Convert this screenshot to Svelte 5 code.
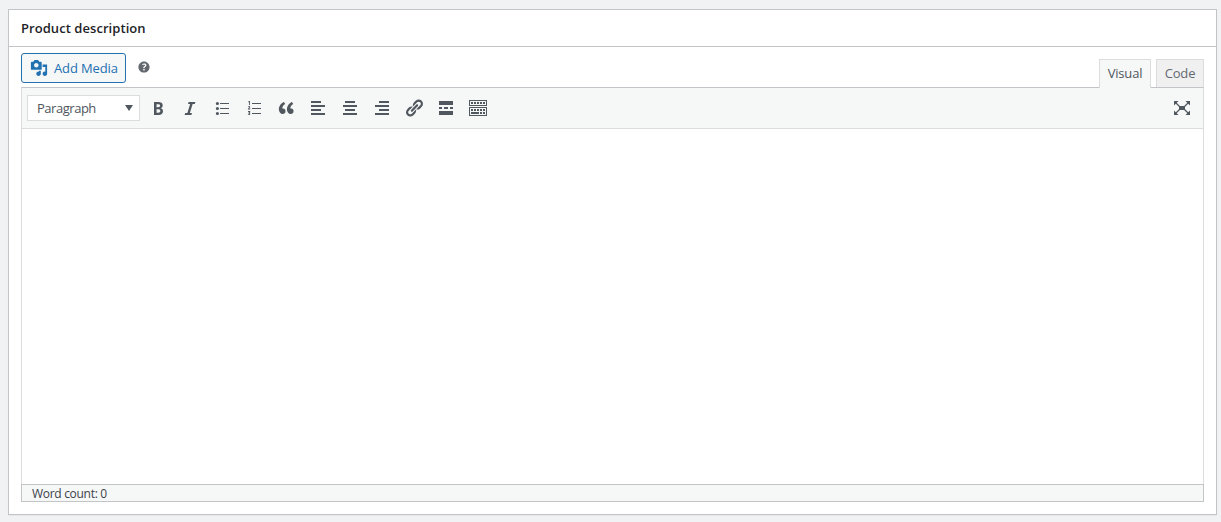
<script>
  let tab = $state('visual');
  let content = $state('');

  let words = $derived(content.trim() ? content.trim().split(/\s+/).length : 0);

  // 20x20 toolbar glyphs
  const tools = [
    { name: 'Bold', d: 'M6 4v13h4.54c1.37 0 2.46-.33 3.26-1 .8-.66 1.2-1.58 1.2-2.77 0-.84-.17-1.51-.51-2.01s-.9-.85-1.67-1.03v-.09c.57-.1 1.02-.4 1.36-.9s.51-1.13.51-1.91c0-1.14-.39-1.98-1.17-2.5C12.75 4.26 11.5 4 9.78 4H6zm2.57 5.15V6.26h1.36c.73 0 1.27.11 1.61.32.34.22.51.58.51 1.07 0 .54-.16.92-.47 1.15s-.82.35-1.51.35h-1.5zm0 2.19h1.6c1.44 0 2.16.53 2.16 1.61 0 .6-.17 1.05-.51 1.34s-.86.43-1.57.43H8.57v-3.38z' },
    { name: 'Italic', d: 'M14.78 6h-2.13l-2.8 9h2.12l-.62 2H4.6l.62-2h2.14l2.8-9H8.03l.62-2h6.75z' },
    { name: 'Bulleted list', d: 'M7 5.500a1.600 1.600 0 1 1-3.200 0 1.600 1.600 0 0 1 3.200 0zM7 10.500a1.600 1.600 0 1 1-3.200 0 1.600 1.600 0 0 1 3.200 0zM7 15.500a1.600 1.600 0 1 1-3.200 0 1.600 1.600 0 0 1 3.200 0zM8 5h9v1H8zM8 10h9v1H8zM8 15h9v1H8z' },
    { name: 'Numbered list', d: 'M8 5h9v1H8zM8 10h9v1H8zM8 15h9v1H8zM5.1 3h.9v4h-.9V4.100l-.9.5v-.9zM4 8.500c.7-.8 2.200-.6 2.200.5 0 .7-.7 1.100-1.100 1.600h1.200v.8H3.900v-.7c.6-.6 1.400-1.200 1.400-1.600 0-.5-.6-.4-1 0zM4 13h2.200v1.300l-.5.5c.8.1.8 2.200-.8 2.200-.4 0-.7-.1-1-.2v-.8c.6.3 1.400.3 1.400-.2 0-.4-.5-.4-.9-.4v-.6l.8-.9H4z' },
    { name: 'Blockquote', d: 'M9.49 13.22c0-.74-.2-1.38-.61-1.9-.62-.78-1.83-.88-2.53-.72-.29-1.65 1.11-3.75 2.92-4.65L7.88 4c-2.73 1.3-5.42 4.28-4.96 8.05C3.21 14.43 4.59 16 6.54 16c.85 0 1.56-.25 2.12-.75s.83-1.18.83-2.03zm8.05 0c0-.74-.2-1.38-.61-1.9-.63-.78-1.83-.88-2.53-.72-.29-1.65 1.11-3.75 2.92-4.65L15.93 4c-2.73 1.3-5.41 4.28-4.95 8.05.29 2.38 1.66 3.95 3.61 3.95.85 0 1.56-.25 2.12-.75s.83-1.18.83-2.03z' },
    { name: 'Align left', d: 'M3 3h10v2H3zM3 7h14v2H3zM3 11h10v2H3zM3 15h14v2H3z' },
    { name: 'Align center', d: 'M5 3h10v2H5zM3 7h14v2H3zM5 11h10v2H5zM3 15h14v2H3z' },
    { name: 'Align right', d: 'M7 3h10v2H7zM3 7h14v2H3zM7 11h10v2H7zM3 15h14v2H3z' },
    { name: 'Link', d: 'M17.74 2.76c1.68 1.69 1.68 4.41 0 6.1l-1.53 1.52c-1.12 1.12-2.7 1.47-4.14 1.09l2.62-2.61.76-.77.76-.76c.84-.84.84-2.2 0-3.04-.84-.85-2.2-.85-3.04 0l-.77.76-3.38 3.38c-.37-1.44-.02-3.02 1.1-4.14l1.52-1.53c1.69-1.68 4.42-1.68 6.1 0zM8.59 13.43l5.34-5.34c.42-.42.42-1.1 0-1.52-.44-.43-1.13-.39-1.53 0l-5.33 5.34c-.42.42-.42 1.1 0 1.52.44.43 1.13.39 1.52 0zm-.76 2.29l4.14-4.15c.38 1.44.03 3.02-1.09 4.14l-1.52 1.53c-1.69 1.68-4.41 1.68-6.1 0-1.68-1.68-1.68-4.42 0-6.1l1.53-1.52c1.12-1.12 2.7-1.47 4.14-1.1l-4.14 4.15c-.85.84-.85 2.2 0 3.05.84.84 2.2.84 3.04 0z' },
    { name: 'Read more', d: 'M3 3h14v4H3zM3 9h3v2H3zM8 9h4v2H8zM14 9h3v2h-3zM3 13h14v4H3z' },
    { name: 'Toolbar toggle', d: 'M1 2h18v6H1zM2 3v4h16V3zM3 4h2v2H3zM6 4h2v2H6zM9 4h2v2H9zM12 4h2v2h-2zM15 4h2v2h-2zM1 9h18v9H1zM2 10v7h16v-7zM3 11h2v2H3zM6 11h2v2H6zM9 11h2v2H9zM12 11h2v2h-2zM15 11h2v2h-2zM3 14h8v2H3zM12 14h2v2h-2zM15 14h2v2h-2z' }
  ];
</script>

<section class="postbox">
  <header><h2>Product description</h2></header>

  <div class="inside">
    <div class="editor-tools">
      <div class="media-buttons">
        <button type="button" class="add-media">
          <svg width="18" height="18" viewBox="0 0 20 20"><path d="M13 11V4c0-.55-.45-1-1-1h-1.67L9 1H5L3.67 3H2c-.55 0-1 .45-1 1v7c0 .55.45 1 1 1h10c.55 0 1-.45 1-1zM7 4.500c1.380 0 2.500 1.120 2.500 2.500S8.380 9.500 7 9.500 4.500 8.380 4.500 7 5.620 4.500 7 4.500zM14 6h5v10.500c0 1.380-1.120 2.500-2.500 2.500S14 17.880 14 16.500s1.120-2.500 2.500-2.500c.17 0 .34.02.5.05V9h-3V6zm-4 8.050V13h2v3.500c0 1.380-1.120 2.500-2.500 2.500S7 17.880 7 16.500 8.120 14 9.500 14c.17 0 .34.02.5.05z" /></svg>
          <span>Add Media</span>
        </button>
        <svg class="help" width="16" height="16" viewBox="0 0 20 20">
          <path d="M17 10c0-3.870-3.140-7-7-7-3.870 0-7 3.130-7 7s3.130 7 7 7c3.860 0 7-3.130 7-7zm-6.300 1.480H9.140v-.43c0-.38.08-.7.24-.98s.46-.57.88-.89c.41-.29.68-.53.81-.71.14-.18.2-.39.2-.62 0-.25-.09-.44-.28-.58-.19-.13-.45-.19-.79-.19-.58 0-1.250.19-2 .57l-.64-1.280c.87-.49 1.800-.74 2.770-.74.81 0 1.450.2 1.920.58.48.39.71.91.71 1.550 0 .43-.09.8-.29 1.110-.19.32-.57.67-1.110 1.060-.38.28-.61.49-.71.63-.1.15-.15.34-.15.57v.35zm-1.470 2.740c-.18-.17-.27-.42-.27-.73 0-.33.08-.58.26-.75s.43-.25.77-.25c.32 0 .57.09.75.26s.27.42.27.74c0 .3-.09.55-.27.72-.18.18-.43.27-.75.27-.33 0-.58-.09-.76-.26z" />
        </svg>
      </div>
      <div class="tabs">
        <button type="button" class:active={tab === 'visual'} onclick={() => (tab = 'visual')}>Visual</button>
        <button type="button" class:active={tab === 'code'} onclick={() => (tab = 'code')}>Code</button>
      </div>
    </div>

    <div class="editor">
      <div class="toolbar">
        <button type="button" class="format">
          <span>Paragraph</span>
          <svg width="8" height="6" viewBox="0 0 8 6"><path d="M0 0h8L4 6z" /></svg>
        </button>
        {#each tools as tool}
          <button type="button" class="tool" aria-label={tool.name}>
            <svg width="20" height="20" viewBox="0 0 20 20"><path fill-rule="evenodd" d={tool.d} /></svg>
          </button>
        {/each}
        <button type="button" class="tool fullscreen" aria-label="Fullscreen">
          <svg width="20" height="20" viewBox="0 0 20 20">
            <path d="M7 8h6v4H7zM2 3h4.500L2 7.500zM18 3h-4.500L18 7.500zM2 17h4.500L2 12.500zM18 17h-4.500l4.500-4.500z" />
            <path class="arms" d="M3.500 4.500 7.500 8.500M16.500 4.500l-4 4M3.500 15.500l4-4M16.500 15.500l-4-4" />
          </svg>
        </button>
      </div>
      <textarea aria-label="Product description" bind:value={content}></textarea>
      <footer>Word count: {words}</footer>
    </div>
  </div>
</section>

<style>
  :global(body) {
    background: #f1f2f4;
    font-family: 'Segoe UI', 'Open Sans', 'Noto Sans', sans-serif;
  }

  :global(#app) {
    overflow: hidden;
  }

  .postbox {
    box-sizing: border-box;
    width: 1209px;
    height: 506px;
    margin: 9px 0 7px 8px;
    border: 1px solid #c3c4c7;
    background: #fff;
    box-shadow: 0 1px 1px rgba(0, 0, 0, 0.04);
  }

  header {
    display: flex;
    align-items: center;
    box-sizing: border-box;
    height: 37px;
    padding: 0 12px;
    border-bottom: 1px solid #c3c4c7;
  }

  h2 {
    margin: 0;
    font-size: 13px;
    font-weight: 600;
    letter-spacing: 0.06px;
    color: #1d2327;
  }

  .inside {
    padding: 6px 12px 0;
  }

  button {
    margin: 0;
    font-family: inherit;
    cursor: pointer;
  }

  svg {
    display: block;
    fill: currentColor;
  }

  .editor-tools {
    display: flex;
    justify-content: space-between;
    height: 34px;
  }

  .media-buttons {
    display: flex;
    align-items: flex-start;
  }

  .add-media {
    display: flex;
    align-items: center;
    gap: 6px;
    box-sizing: border-box;
    width: 105px;
    height: 30px;
    padding: 0 0 0 8px;
    border: 1px solid #2271b1;
    border-radius: 3px;
    background: #f6f7f7;
    color: #2271b1;
    font-size: 13px;
    letter-spacing: -0.12px;
    white-space: nowrap;
  }

  .help {
    margin: 6px 0 0 10px;
    color: #646970;
  }

  .tabs {
    display: flex;
    align-items: flex-end;
    gap: 5px;
  }

  .tabs button {
    box-sizing: border-box;
    width: 48px;
    height: 28px;
    padding: 0 0 2px;
    border: 1px solid #dcdcde;
    border-bottom: 0;
    background: #f0f0f1;
    color: #646970;
    font-size: 13px;
    letter-spacing: -0.2px;
  }

  .tabs button:first-child {
    width: 52px;
  }

  /* the open tab covers the editor's top border */
  .tabs .active {
    height: 29px;
    margin-bottom: -1px;
    padding-bottom: 3px;
    background: #f6f7f7;
    color: #50575e;
    z-index: 1;
  }

  .editor {
    display: flex;
    flex-direction: column;
    box-sizing: border-box;
    height: 415px;
    border: 1px solid #dcdcde;
    border-top-color: #c3c4c7;
    border-bottom: 0;
  }

  .toolbar {
    display: flex;
    align-items: center;
    box-sizing: border-box;
    height: 41px;
    padding: 0 5px;
    border-bottom: 1px solid #dcdcde;
    background: #f6f7f7;
  }

  .format {
    display: flex;
    align-items: center;
    justify-content: space-between;
    box-sizing: border-box;
    width: 113px;
    height: 26px;
    margin-right: 2px;
    padding: 0 6px 0 9px;
    border: 1px solid #dcdcde;
    background: #fff;
    color: #50575e;
    font-size: 13px;
    letter-spacing: -0.47px;
  }

  .tool {
    width: 30px;
    height: 30px;
    margin: 0 1px;
    padding: 5px;
    border: 0;
    background: none;
    color: #50575e;
  }

  .fullscreen {
    margin-left: auto;
  }

  .arms {
    fill: none;
    stroke: currentColor;
    stroke-width: 1.2;
  }

  textarea {
    flex: 1;
    padding: 10px;
    border: 0;
    outline: 0;
    resize: none;
    font: 16px/1.5 Georgia, 'Liberation Serif', serif;
  }

  footer {
    box-sizing: border-box;
    height: 18px;
    margin: 0 -1px;
    padding-left: 10px;
    border: 1px solid #c3c4c7;
    background: #f6f7f7;
    color: #3c434a;
    font-size: 12px;
    letter-spacing: -0.3px;
    line-height: 17px;
  }
</style>
